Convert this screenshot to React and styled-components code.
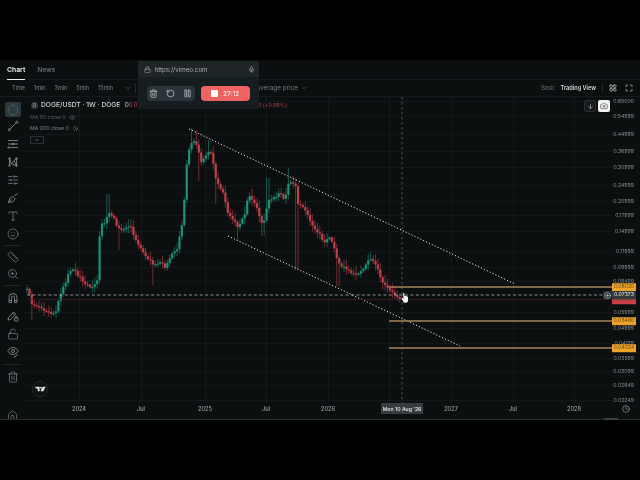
import React from 'react';
import styled, { createGlobalStyle } from 'styled-components';
import {
  ChevronDown,
  ChevronUp,
  Crosshair,
  Type,
  Smile,
  Ruler,
  ZoomIn,
  LockOpen,
  Eye,
  Ban,
  Trash2,
  Home,
  SlidersHorizontal,
  LayoutGrid,
  Maximize,
  ArrowDown,
  Camera,
  CirclePlus,
  Lock,
  Mic,
  RotateCcw,
  Pause,
  Clock,
} from 'lucide-react';

const GREEN = '#1f9a7c';
const RED = '#c9444f';

// close price path of the chart, traced in page pixels
const PATH = [
  [27, 290], [30, 296], [32, 304], [38, 307], [45, 311], [52, 314], [56, 312], [60, 296],
  [66, 281], [70, 270], [74, 268], [78, 275], [84, 282], [90, 287], [96, 284], [98, 280],
  [100, 224], [105, 222], [108, 212], [113, 217], [118, 228], [123, 231], [130, 225], [136, 240],
  [143, 252], [148, 258], [153, 264], [160, 262], [165, 267], [170, 257], [177, 250], [183, 218],
  [187, 160], [190, 146], [193, 140], [198, 147], [200, 163], [204, 158], [207, 153], [212, 153],
  [215, 177], [223, 193], [228, 213], [233, 220], [238, 227], [245, 213], [248, 195], [255, 203],
  [263, 227], [268, 200], [275, 197], [280, 193], [285, 200], [288, 183], [295, 183], [298, 203],
  [307, 212], [313, 227], [320, 235], [323, 243], [328, 237], [333, 243], [338, 263], [347, 270],
  [357, 275], [365, 267], [370, 258], [375, 263], [383, 283], [390, 290], [396, 296], [401, 300],
];

const LONG_WICKS = { 32: 320, 119: 250, 153: 285, 198: 181, 215: 204, 238: 240, 263: 236, 297: 270, 338: 286, 383: 290 };
const TOP_WICKS = { 108: 194, 192: 128, 196: 130, 209: 140, 268: 178, 288: 168, 370: 252 };

function closeAt(x) {
  for (let i = 1; i < PATH.length; i += 1) {
    if (x <= PATH[i][0]) {
      const [x0, y0] = PATH[i - 1];
      const [x1, y1] = PATH[i];
      return y0 + ((y1 - y0) * (x - x0)) / (x1 - x0);
    }
  }
  return PATH[PATH.length - 1][1];
}

function buildCandles() {
  let seed = 11;
  const rand = () => {
    seed = (seed * 16807) % 2147483647;
    return seed / 2147483647;
  };
  const candles = [];
  let open = closeAt(27);
  for (let x = 27; x <= 401; x += 2.42) {
    const close = closeAt(x) + (rand() - 0.5) * 2.5;
    const spread = 1.5 + rand() * 6;
    const key = Math.round(x);
    const low = Object.keys(LONG_WICKS).find(k => Math.abs(k - key) <= 1);
    const high = Object.keys(TOP_WICKS).find(k => Math.abs(k - key) <= 1);
    candles.push({
      x,
      open,
      close,
      top: high ? TOP_WICKS[high] : Math.min(open, close) - spread,
      bottom: low ? LONG_WICKS[low] : Math.max(open, close) + spread * 0.8,
    });
    open = close;
  }
  return candles;
}

const CANDLES = buildCandles();

const PRICE_TICKS = [
  ['0.65000', 101], ['0.54999', 116], ['0.44999', 134], ['0.36999', 151], ['0.30999', 167],
  ['0.24999', 185], ['0.20999', 201], ['0.17999', 215], ['0.14999', 231], ['0.11999', 251],
  ['0.09999', 267], ['0.08499', 281], ['0.05999', 312], ['0.04999', 328], ['0.04199', 343],
  ['0.03599', 358], ['0.03099', 371], ['0.02649', 385], ['0.02249', 400],
];
const GRID_X = [79, 141, 205, 266, 328, 389, 451, 513, 574];
const TIME_LABELS = [
  ['2024', 79], ['Jul', 141], ['2025', 205], ['Jul', 266], ['2026', 328],
  ['2027', 451], ['Jul', 513], ['2028', 574],
];
const PRICE_TAGS = [
  ['0.06880', 300, 'red'],
  ['0.08020', 287, 'orange'],
  ['0.05460', 321, 'orange'],
  ['0.04024', 348, 'orange'],
  ['0.07373', 295, 'grey'],
];
const TIMEFRAMES = ['Time', '1min', '3min', '5min', '15min'];

const LineToolIcon = props => (
  <svg viewBox="0 0 24 24" fill="none" stroke="currentColor" strokeWidth="1.6" {...props}>
    <path d="M6 18 18 6" />
    <circle cx="4.5" cy="19.5" r="2" />
    <circle cx="19.5" cy="4.5" r="2" />
  </svg>
);

const ChannelIcon = props => (
  <svg viewBox="0 0 24 24" fill="none" stroke="currentColor" strokeWidth="1.6" {...props}>
    <path d="M2 5h20M2 12h20M5 19h17" />
    <circle cx="3" cy="19" r="1.6" />
    <circle cx="12" cy="12" r="1.6" />
  </svg>
);

const PatternIcon = props => (
  <svg viewBox="0 0 24 24" fill="none" stroke="currentColor" strokeWidth="1.6" {...props}>
    <path d="M5 5 9 16 14 9 19 19M5 5 5 19M19 5 19 19 9 16M14 9 19 5" />
    <circle cx="5" cy="5" r="1.7" />
    <circle cx="19" cy="5" r="1.7" />
    <circle cx="5" cy="19" r="1.7" />
    <circle cx="19" cy="19" r="1.7" />
  </svg>
);

const BrushIcon = props => (
  <svg viewBox="0 0 24 24" fill="none" stroke="currentColor" strokeWidth="1.6" {...props}>
    <path d="M3 21l2.5-8 6-4 4.5 4.5-4 6zM3 21l5.5-6M14.5 8l7-5" />
  </svg>
);

const MagnetIcon = props => (
  <svg viewBox="0 0 24 24" fill="none" stroke="currentColor" strokeWidth="1.6" {...props}>
    <path d="M4 21V11a8 8 0 0 1 16 0v10h-5V11a3 3 0 0 0-6 0v10zM4 17h5M15 17h5" />
  </svg>
);

const PenLockIcon = props => (
  <svg viewBox="0 0 24 24" fill="none" stroke="currentColor" strokeWidth="1.6" {...props}>
    <path d="M2 20l1-5L13 4l4 4L7 19zM11 6l4 4" />
    <rect x="15" y="16" width="7" height="6" rx="1" />
    <path d="M16.5 16v-1.5a2 2 0 0 1 4 0V16" />
  </svg>
);

const EyePenIcon = props => (
  <svg viewBox="0 0 24 24" fill="none" stroke="currentColor" strokeWidth="1.6" {...props}>
    <path d="M1.500 10S5.500 3 12 3s10.500 7 10.500 7-4 7-10.500 7S1.500 10 1.500 10z" />
    <circle cx="12" cy="10" r="3" />
    <path d="M14 23l7-6" strokeWidth="2" />
  </svg>
);

const TvLogo = props => (
  <svg viewBox="0 0 24 12" fill="#f0f0f0" {...props}>
    <path d="M1 1h9v10H6V5H1z" />
    <circle cx="13" cy="3" r="2" />
    <path d="M17 1h6l-5 10h-6z" />
  </svg>
);

const GlobalStyle = createGlobalStyle`
  html, body {
    margin: 0;
    background: #000;
    overflow: hidden;
  }
  body {
    font-family: 'Inter', 'Liberation Sans', sans-serif;
  }
`;

const Screen = styled.div`
  position: relative;
  box-sizing: border-box;
  width: 640px;
  height: 480px;
  padding: 60px 0;
  background: #000;
  filter: blur(0.35px);
`;

const Terminal = styled.div`
  display: flex;
  flex-direction: column;
  box-sizing: border-box;
  height: 360px;
  background: #0b0f10;
  border-bottom: 1px solid #23282a;
  color: #9aa0a2;
`;

const TabBar = styled.div`
  display: flex;
  flex: none;
  gap: 12px;
  box-sizing: border-box;
  height: 20px;
  padding-left: 7px;
  border-bottom: 1px solid #151a1c;
`;

const Tab = styled.div`
  display: flex;
  align-items: center;
  box-sizing: border-box;
  height: 20px;
  font-size: 6.8px;
  font-weight: ${props => (props.$active ? 600 : 400)};
  color: ${props => (props.$active ? '#f2f2f2' : '#7c8385')};
  border-bottom: 1px solid ${props => (props.$active ? '#f2f2f2' : 'transparent')};
`;

const Toolbar = styled.div`
  display: flex;
  flex: none;
  align-items: center;
  box-sizing: border-box;
  height: 17px;
  padding: 0 7px 0 12px;
  border-bottom: 1px solid #151a1c;
  font-size: 5.5px;
  color: #7c8385;
`;

const Timeframes = styled.div`
  display: flex;
  align-items: center;
  gap: 9px;
`;

const MoreChevron = styled.span`
  display: flex;
  margin-left: 3px;
`;

const ToolbarDivider = styled.div`
  width: 1px;
  height: 10px;
  margin: 0 ${props => props.$gap}px;
  background: #24292b;
`;

const ToolbarItem = styled.div`
  display: flex;
  align-items: center;
  gap: 3px;
  margin-left: ${props => props.$offset || 0}px;
  font-size: 6.4px;
  color: #73797b;
`;

const Spacer = styled.div`
  flex: 1;
`;

const ViewSwitch = styled.span`
  margin-right: ${props => (props.$active ? 0 : 5)}px;
  font-size: 5.6px;
  font-weight: ${props => (props.$active ? 600 : 400)};
  color: ${props => (props.$active ? '#d5d8d9' : '#62686a')};
`;

const ToolbarIcon = styled.span`
  display: flex;
  margin-left: ${props => props.$gap}px;
  color: #c8cbcc;
`;

const Body = styled.div`
  display: flex;
  flex: 1;
  min-height: 0;
`;

const Rail = styled.div`
  display: flex;
  flex-direction: column;
  align-items: center;
  flex: none;
  width: 25px;
  padding-top: 5px;
  overflow: hidden;
  color: #8f9597;
`;

const RailButton = styled.div`
  display: flex;
  flex: none;
  align-items: center;
  justify-content: center;
  width: 16px;
  height: ${props => props.$h || 18}px;
  border-radius: 2px;
  background: ${props => (props.$active ? '#30373a' : 'transparent')};
  color: ${props => (props.$active ? '#3f6f77' : 'inherit')};
`;

const RailDivider = styled.div`
  flex: none;
  width: 17px;
  height: 1px;
  margin: ${props => props.$m || 3}px 0;
  background: #23282a;
`;

const RailBottom = styled.div`
  display: flex;
  flex: none;
  margin-top: auto;
  height: 9px;
`;

const Workspace = styled.div`
  display: flex;
  flex-direction: column;
  flex: 1;
  min-width: 0;
`;

const ChartRow = styled.div`
  display: flex;
  flex: none;
  height: 306px;
`;

const Plot = styled.div`
  position: relative;
  flex: none;
  width: 587px;
  height: 306px;
`;

const ChartSvg = styled.svg`
  display: block;
`;

const Legend = styled.div`
  position: absolute;
  top: 4px;
  left: 5px;
  display: flex;
  flex-direction: column;
  align-items: flex-start;
`;

const LegendTitle = styled.div`
  display: flex;
  align-items: center;
  gap: 3px;
  height: 8px;
  margin-left: 1px;
  font-size: 6.7px;
  font-weight: 500;
  color: #d4d7d8;
  white-space: nowrap;
`;

const CoinBadge = styled.span`
  display: flex;
  align-items: center;
  justify-content: center;
  width: 7px;
  height: 7px;
  border-radius: 50%;
  font-size: 4.5px;
  background: #33393b;
  color: #9aa0a2;
`;

const LegendValue = styled.span`
  margin-left: 1px;
  font-size: 5.6px;
  color: #c4c7c8;
`;

const LegendPrice = styled.span`
  color: #b43f49;
`;

const Change = styled.span`
  position: absolute;
  top: 5px;
  left: 233px;
  font-size: 5.4px;
  color: #b43f49;
  white-space: nowrap;
`;

const Indicator = styled.div`
  display: flex;
  align-items: center;
  gap: 4px;
  height: 11px;
  margin-top: ${props => props.$top || 0}px;
  font-size: 5.2px;
  color: ${props => (props.$dim ? '#555b5d' : '#80868a')};
  white-space: nowrap;
`;

const CollapseButton = styled.div`
  display: flex;
  align-items: center;
  justify-content: center;
  box-sizing: border-box;
  width: 14px;
  height: 8px;
  margin-top: 2px;
  border: 1px solid #2a2f31;
  color: #a5aaac;
`;

const ChartActions = styled.div`
  position: absolute;
  top: 3px;
  right: 2px;
  display: flex;
  gap: 2px;
`;

const ChartAction = styled.div`
  display: flex;
  align-items: center;
  justify-content: center;
  width: 12px;
  height: 12px;
  border-radius: 2px;
  background: ${props => (props.$light ? '#f2f2f2' : '#15191b')};
  border: ${props => (props.$light ? 'none' : '1px solid #272c2e')};
  box-sizing: border-box;
  color: ${props => (props.$light ? '#555' : '#c0c4c5')};
`;

const Watermark = styled.div`
  position: absolute;
  left: 7px;
  top: 284px;
  display: flex;
  align-items: center;
  justify-content: center;
  box-sizing: border-box;
  width: 16px;
  height: 16px;
  border: 1px solid #25292b;
  border-radius: 50%;
  background: #0e1213;
`;

const AddLevel = styled.div`
  position: absolute;
  left: 578px;
  top: 194px;
  display: flex;
  align-items: center;
  justify-content: center;
  width: 9px;
  height: 8px;
  background: #2a2f31;
  color: #d6d8d9;
`;

const PriceAxis = styled.div`
  position: relative;
  flex: 1;
`;

const PriceTick = styled.span`
  position: absolute;
  right: 6px;
  transform: translateY(-50%);
  font-size: 5.2px;
  color: #878d8f;
`;

const PriceTag = styled.span`
  position: absolute;
  left: 0;
  width: 24px;
  height: 7.5px;
  line-height: 7.5px;
  transform: translateY(-50%);
  text-align: center;
  font-size: 5.2px;
  color: ${props => (props.$kind === 'grey' ? '#e6e8e8' : '#6e4a0c')};
  background: ${props =>
    ({ orange: '#eea22e', red: '#c9404c', grey: '#33393b' }[props.$kind])};
`;

const TimeAxis = styled.div`
  position: relative;
  flex: none;
  height: 14px;
`;

const TimeLabel = styled.span`
  position: absolute;
  top: 3px;
  transform: translateX(-50%);
  font-size: 5.6px;
  font-weight: 500;
  color: #9a9fa1;
`;

const CrosshairLabel = styled.span`
  position: absolute;
  left: 356px;
  top: 0;
  width: 42px;
  height: 11px;
  line-height: 12px;
  text-align: center;
  font-size: 5.2px;
  font-weight: 500;
  color: #eceeee;
  background: #363b3d;
  white-space: nowrap;
`;

const AxisClock = styled.span`
  position: absolute;
  right: 10px;
  top: 2px;
  display: flex;
  color: #9a9fa1;
`;

const ScrollHandle = styled.div`
  position: absolute;
  left: 603px;
  top: 418px;
  width: 16px;
  height: 2px;
  border-radius: 2px 2px 0 0;
  background: #3a3f41;
`;

const Recorder = styled.div`
  position: absolute;
  left: 137.500px;
  top: 61px;
  width: 121px;
  height: 48px;
  background: #161d21;
`;

const RecorderHeader = styled.div`
  display: flex;
  align-items: center;
  gap: 4px;
  height: 16px;
  padding: 0 4px 0 6px;
  background: #1f2427;
  font-size: 6.2px;
  color: #a9aeb0;
`;

const RecorderUrl = styled.span`
  flex: 1;
`;

const RecorderControls = styled.div`
  display: flex;
  gap: 6px;
  padding: 9px 0 0 9px;
`;

const ControlGroup = styled.div`
  display: flex;
  align-items: center;
  gap: 8px;
  height: 15px;
  padding: 0 2.500px;
  border-radius: 4px;
  background: #2b3438;
  color: #c6cacb;
`;

const StopButton = styled.div`
  display: flex;
  align-items: center;
  justify-content: center;
  gap: 5px;
  width: 49px;
  height: 15px;
  border-radius: 4px;
  background: #ee6260;
  font-size: 6.4px;
  font-weight: 600;
  color: #f8dcdb;
`;

const StopSquare = styled.span`
  width: 7px;
  height: 7px;
  border-radius: 1px;
  background: #fff;
`;

const Cursor = () => (
  <g fill="#f2f2f2">
    <path d="M403 293.500c0-.8 1.400-.8 1.400 0v2.500l.6-.3 1 .2 1 .4 1 .6v4c-.4 1-1 1.600-1.600 1.800h-2.200c-.6-.4-1.400-2-2.400-4-.4-.8.2-1.200.8-.8l1 1z" />
  </g>
);

const Chart = () => (
  <ChartSvg width="587" height="306" viewBox="25 97 587 306">
    {PRICE_TICKS.map(([label, y]) => (
      <line key={label} x1="25" x2="612" y1={y + 0.5} y2={y + 0.5} stroke="#141a1b" strokeWidth="0.8" />
    ))}
    {GRID_X.map(x => (
      <line key={x} x1={x + 0.5} x2={x + 0.5} y1="97" y2="403" stroke="#151b1c" strokeWidth="0.8" />
    ))}
    {CANDLES.map(c => {
      const color = c.close < c.open ? GREEN : RED;
      return (
        <g key={c.x}>
          <line x1={c.x} x2={c.x} y1={c.top} y2={c.bottom} stroke={color} strokeWidth="0.9" opacity="0.6" />
          <rect
            x={c.x - 1.1}
            y={Math.min(c.open, c.close)}
            width="2.2"
            height={Math.max(1.2, Math.abs(c.close - c.open))}
            fill={color}
            opacity="0.92"
          />
        </g>
      );
    })}
    <line x1="189" y1="129" x2="515" y2="284" stroke="#e6e8e8" strokeWidth="1" strokeDasharray="1.2 2" />
    <line x1="228" y1="236" x2="460" y2="346" stroke="#e6e8e8" strokeWidth="1" strokeDasharray="1.2 2" />
    <line x1="27" x2="612" y1="299.5" y2="299.5" stroke="#3a2024" strokeWidth="0.8" />
    <line x1="27" x2="603" y1="295" y2="295" stroke="#c2c6c7" strokeWidth="0.7" strokeDasharray="3 2.4" />
    <line x1="402" x2="402" y1="97" y2="403" stroke="#6a7072" strokeWidth="0.7" strokeDasharray="2.5 2.5" />
    {[287, 321, 348].map(y => (
      <line key={y} x1="389" x2="612" y1={y} y2={y} stroke="#a98558" strokeWidth="1.5" />
    ))}
    <Cursor />
  </ChartSvg>
);

export default function App() {
  return (
    <Screen>
      <GlobalStyle />
      <Terminal>
        <TabBar>
          <Tab $active>Chart</Tab>
          <Tab>News</Tab>
        </TabBar>
        <Toolbar>
          <Timeframes>
            {TIMEFRAMES.map(t => (
              <span key={t}>{t}</span>
            ))}
            <MoreChevron>
              <ChevronDown size={6} />
            </MoreChevron>
          </Timeframes>
          <ToolbarDivider $gap={4} />
          <ToolbarItem $offset={116}>
            Average price <ChevronDown size={6} />
          </ToolbarItem>
          <Spacer />
          <ViewSwitch>Basic</ViewSwitch>
          <ViewSwitch $active>Trading View</ViewSwitch>
          <ToolbarDivider $gap={6} />
          <ToolbarIcon $gap={0}>
            <LayoutGrid size={8} />
          </ToolbarIcon>
          <ToolbarIcon $gap={8}>
            <Maximize size={8} />
          </ToolbarIcon>
        </Toolbar>
        <Body>
          <Rail>
            <RailButton $active $h={15}>
              <Crosshair size={12} strokeWidth={1.2} />
            </RailButton>
            <RailButton>
              <LineToolIcon width={12} height={12} />
            </RailButton>
            <RailButton>
              <ChannelIcon width={12} height={12} />
            </RailButton>
            <RailButton>
              <PatternIcon width={12} height={12} />
            </RailButton>
            <RailButton>
              <SlidersHorizontal size={12} strokeWidth={1.3} />
            </RailButton>
            <RailButton>
              <BrushIcon width={12} height={12} />
            </RailButton>
            <RailButton>
              <Type size={12} strokeWidth={1.3} />
            </RailButton>
            <RailButton>
              <Smile size={12} strokeWidth={1.2} />
            </RailButton>
            <RailDivider $m={2} />
            <RailButton $h={17}>
              <Ruler size={12} strokeWidth={1.2} />
            </RailButton>
            <RailButton $h={17}>
              <ZoomIn size={12} strokeWidth={1.2} />
            </RailButton>
            <RailDivider />
            <RailButton>
              <MagnetIcon width={12} height={12} />
            </RailButton>
            <RailButton>
              <PenLockIcon width={12} height={12} />
            </RailButton>
            <RailButton>
              <LockOpen size={12} strokeWidth={1.2} />
            </RailButton>
            <RailButton>
              <EyePenIcon width={12} height={12} />
            </RailButton>
            <RailDivider />
            <RailButton>
              <Trash2 size={12} strokeWidth={1.2} />
            </RailButton>
            <RailBottom>
              <Home size={11} strokeWidth={1.3} />
            </RailBottom>
          </Rail>
          <Workspace>
            <ChartRow>
              <Plot>
                <Chart />
                <Legend>
                  <LegendTitle>
                    <CoinBadge>D</CoinBadge>
                    DOGE/USDT · 1W · DOGE
                    <LegendValue>
                      O<LegendPrice>0.0</LegendPrice>
                    </LegendValue>
                  </LegendTitle>
                  <Indicator $top={2.5} $dim>
                    MA 50 close 0 <Eye size={7} />
                  </Indicator>
                  <Indicator>
                    MA 200 close 0 <Ban size={5} />
                  </Indicator>
                  <CollapseButton>
                    <ChevronUp size={6} />
                  </CollapseButton>
                </Legend>
                <Change>3 (+0.98%)</Change>
                <ChartActions>
                  <ChartAction>
                    <ArrowDown size={7} />
                  </ChartAction>
                  <ChartAction $light>
                    <Camera size={8} />
                  </ChartAction>
                </ChartActions>
                <Watermark>
                  <TvLogo width={11} height={6} />
                </Watermark>
                <AddLevel>
                  <CirclePlus size={7} />
                </AddLevel>
              </Plot>
              <PriceAxis>
                {PRICE_TICKS.map(([label, y]) => (
                  <PriceTick key={label} style={{ top: y - 97 }}>
                    {label}
                  </PriceTick>
                ))}
                {PRICE_TAGS.map(([label, y, kind]) => (
                  <PriceTag key={label} $kind={kind} style={{ top: y - 97 }}>
                    {label}
                  </PriceTag>
                ))}
              </PriceAxis>
            </ChartRow>
            <TimeAxis>
              {TIME_LABELS.map(([label, x]) => (
                <TimeLabel key={`${label}${x}`} style={{ left: x - 25 }}>
                  {label}
                </TimeLabel>
              ))}
              <CrosshairLabel>Mon 10 Aug '26</CrosshairLabel>
              <AxisClock>
                <Clock size={8} />
              </AxisClock>
            </TimeAxis>
          </Workspace>
        </Body>
      </Terminal>
      <ScrollHandle />
      <Recorder>
        <RecorderHeader>
          <Lock size={7} />
          <RecorderUrl>https://vimeo.com</RecorderUrl>
          <Mic size={7} />
        </RecorderHeader>
        <RecorderControls>
          <ControlGroup>
            <Trash2 size={9} />
            <RotateCcw size={9} />
            <Pause size={9} />
          </ControlGroup>
          <StopButton>
            <StopSquare />
            27:12
          </StopButton>
        </RecorderControls>
      </Recorder>
    </Screen>
  );
}
